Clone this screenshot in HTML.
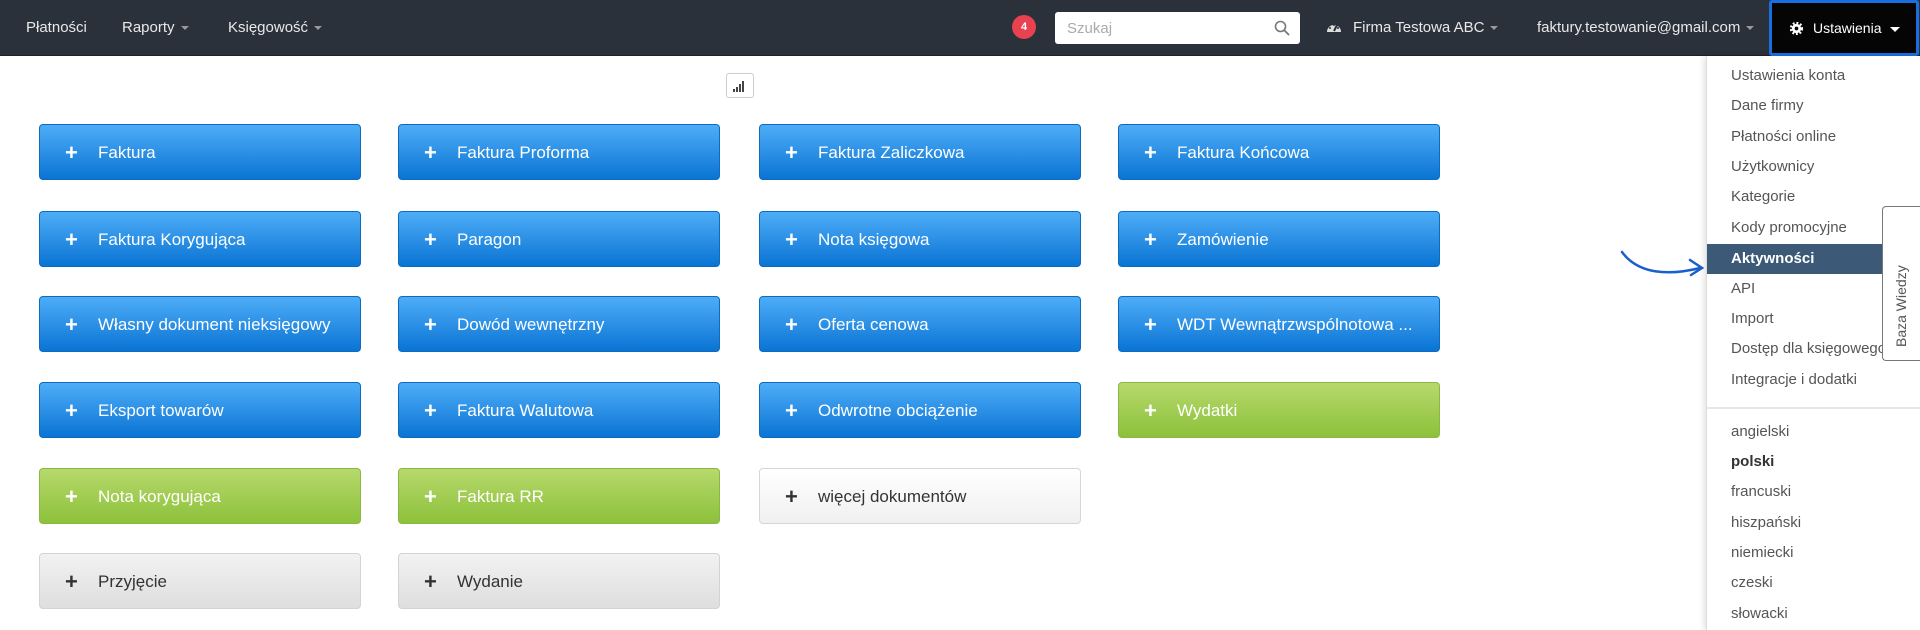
<!DOCTYPE html>
<html><head><meta charset="utf-8"><style>
*{box-sizing:border-box;margin:0;padding:0}
body{width:1920px;height:630px;overflow:hidden;background:#fff;font-family:"Liberation Sans",Arial,sans-serif;position:relative}
.nav{position:absolute;left:0;top:0;width:1920px;height:56px;background:#2b313b;border-bottom:1px solid #1d2127;color:#e8e8e8;font-size:15px}
.nav span{position:absolute;top:19px}
.car{display:inline-block;width:0;height:0;border-left:4px solid transparent;border-right:4px solid transparent;border-top:4px solid #999;margin-left:6px;vertical-align:middle}
.badge{position:absolute;left:1012px;top:15px;width:24px;height:24px;border-radius:50%;background:#e8414f;color:#fff;font-size:11px;font-weight:bold;text-align:center;line-height:24px}
.search{position:absolute;left:1055px;top:12px;width:245px;height:32px;background:#fff;border-radius:3px;color:#aaa;font-size:15px;padding:8px 12px}
.ust{position:absolute;left:1769px;top:0;width:150px;height:56px;background:#050505;border:3px solid #1a6fe0;border-radius:3px;color:#fff;font-size:14px}
.btn{position:absolute;width:322px;height:56px;border-radius:4px;font-size:17px;line-height:56px;padding-left:58px;color:#fff}
.btn b{position:absolute;left:25px;top:0;font-size:22px;font-weight:bold}
.bl{background:linear-gradient(#4eadf7,#0a74d4);border:1px solid #0d6cc0}
.gr{background:linear-gradient(#b6d96c,#8dc13b);border:1px solid #8bb844}
.gy{background:linear-gradient(#f2f2f2,#dedede);border:1px solid #d3d3d3;color:#333}
.wh{background:linear-gradient(#fff,#f0f0f0);border:1px solid #d6d6d6;color:#333}
.dd{position:absolute;left:1706px;top:56px;width:214px;height:574px;background:#fff;border-left:1px solid #ddd;box-shadow:-2px 0 6px rgba(0,0,0,.12);font-size:15px;color:#555}
.dd div{position:absolute;left:0;width:214px;height:30px;line-height:30px;padding-left:24px}
</style></head><body>
<div class="nav">
<span style="left:26px">Płatności</span>
<span style="left:122px">Raporty<i class="car"></i></span>
<span style="left:228px">Księgowość<i class="car"></i></span>
<div class="badge">4</div>
<div class="search">Szukaj
<svg style="position:absolute;right:10px;top:8px" width="16" height="16" viewBox="0 0 16 16"><circle cx="6.5" cy="6.5" r="5" fill="none" stroke="#777" stroke-width="1.6"/><path d="M10 10l5 5" stroke="#777" stroke-width="1.8"/></svg></div>
<svg style="position:absolute;left:1326px;top:20px" width="16" height="14" viewBox="0 0 16 14"><path d="M1 12A7 7 0 0 1 15 12Z" fill="#ddd"/><path d="M8 11L11 5" stroke="#2b313b" stroke-width="2"/><circle cx="4" cy="8" r="1" fill="#2b313b"/><circle cx="8" cy="5" r="1" fill="#2b313b"/><circle cx="12" cy="8" r="1" fill="#2b313b"/></svg>
<span style="left:1353px">Firma Testowa ABC<i class="car"></i></span>
<span style="left:1537px">faktury.testowanie@gmail.com<i class="car"></i></span>
</div>
<div class="ust"><svg style="position:absolute;left:18px;top:19px" width="13" height="13" viewBox="0 0 14 14"><circle cx="7" cy="7" r="5" fill="#fff"/><circle cx="7" cy="7" r="6" fill="none" stroke="#fff" stroke-width="2.5" stroke-dasharray="2 2"/><circle cx="7" cy="7" r="2" fill="#050505"/></svg><span style="position:absolute;left:41px;top:17px">Ustawienia</span><i class="car" style="position:absolute;left:112px;top:24px;border-top-color:#fff;border-width:5px 5px 0"></i></div>

<div style="position:absolute;left:726px;top:73px;width:28px;height:25px;border:1px solid #ccc;border-radius:3px;background:#fff"><svg style="position:absolute;left:6px;top:6px" width="14" height="12"><rect x="0" y="9" width="2" height="3" fill="#444"/><rect x="3" y="7" width="2" height="5" fill="#444"/><rect x="6" y="4" width="2" height="8" fill="#444"/><rect x="9" y="1" width="2" height="11" fill="#444"/></svg></div>

<div class="btn bl" style="left:39px;top:124px"><b>+</b>Faktura</div>
<div class="btn bl" style="left:398px;top:124px"><b>+</b>Faktura Proforma</div>
<div class="btn bl" style="left:759px;top:124px"><b>+</b>Faktura Zaliczkowa</div>
<div class="btn bl" style="left:1118px;top:124px"><b>+</b>Faktura Końcowa</div>
<div class="btn bl" style="left:39px;top:211px"><b>+</b>Faktura Korygująca</div>
<div class="btn bl" style="left:398px;top:211px"><b>+</b>Paragon</div>
<div class="btn bl" style="left:759px;top:211px"><b>+</b>Nota księgowa</div>
<div class="btn bl" style="left:1118px;top:211px"><b>+</b>Zamówienie</div>
<div class="btn bl" style="left:39px;top:296px"><b>+</b>Własny dokument nieksięgowy</div>
<div class="btn bl" style="left:398px;top:296px"><b>+</b>Dowód wewnętrzny</div>
<div class="btn bl" style="left:759px;top:296px"><b>+</b>Oferta cenowa</div>
<div class="btn bl" style="left:1118px;top:296px"><b>+</b>WDT Wewnątrzwspólnotowa ...</div>
<div class="btn bl" style="left:39px;top:382px"><b>+</b>Eksport towarów</div>
<div class="btn bl" style="left:398px;top:382px"><b>+</b>Faktura Walutowa</div>
<div class="btn bl" style="left:759px;top:382px"><b>+</b>Odwrotne obciążenie</div>
<div class="btn gr" style="left:1118px;top:382px"><b>+</b>Wydatki</div>
<div class="btn gr" style="left:39px;top:468px"><b>+</b>Nota korygująca</div>
<div class="btn gr" style="left:398px;top:468px"><b>+</b>Faktura RR</div>
<div class="btn wh" style="left:759px;top:468px"><b>+</b>więcej dokumentów</div>
<div class="btn gy" style="left:39px;top:553px"><b>+</b>Przyjęcie</div>
<div class="btn gy" style="left:398px;top:553px"><b>+</b>Wydanie</div>

<svg style="position:absolute;left:1618px;top:248px" width="90" height="34" viewBox="0 0 90 34"><path d="M4 4C20 26 50 28 82 20" fill="none" stroke="#1a5fd0" stroke-width="2.5" stroke-linecap="round"/><path d="M72 12L84 20L73 27" fill="none" stroke="#1a5fd0" stroke-width="2.5" stroke-linecap="round"/></svg>

<div class="dd">
<div style="top:5px">Ustawienia konta</div>
<div style="top:35px">Dane firmy</div>
<div style="top:66px">Płatności online</div>
<div style="top:96px">Użytkownicy</div>
<div style="top:126px">Kategorie</div>
<div style="top:157px">Kody promocyjne</div>
<div style="top:188px;background:#3c5a77;color:#fff;font-weight:bold">Aktywności</div>
<div style="top:218px">API</div>
<div style="top:248px">Import</div>
<div style="top:278px">Dostęp dla księgowego</div>
<div style="top:309px">Integracje i dodatki</div>
<div style="top:351px;height:2px;padding:0;background:#e6e6e6"></div>
<div style="top:361px">angielski</div>
<div style="top:391px;font-weight:bold;color:#333">polski</div>
<div style="top:421px">francuski</div>
<div style="top:452px">hiszpański</div>
<div style="top:482px">niemiecki</div>
<div style="top:512px">czeski</div>
<div style="top:543px">słowacki</div>
</div>
<div style="position:absolute;left:1882px;top:206px;width:40px;height:155px;background:#fff;border:1px solid #777;border-right:none;border-radius:4px 0 0 4px"><span style="position:absolute;left:10px;top:140px;transform:rotate(-90deg);transform-origin:0 0;font-size:14px;color:#555;white-space:nowrap">Baza Wiedzy</span></div>
</body></html>
